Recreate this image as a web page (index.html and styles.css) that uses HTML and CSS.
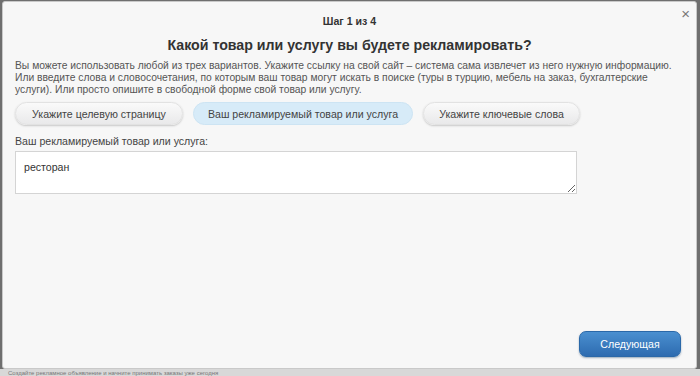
FILE: index.html
```html
<!DOCTYPE html>
<html>
<head>
    <meta charset="utf-8">
    <link rel="stylesheet" href="styles.css">
</head>
<body>
    <div class="dialog">
        <span class="close">&#215;</span>
        <div class="step">Шаг 1 из 4</div>
        <h1>Какой товар или услугу вы будете рекламировать?</h1>
        <p class="intro">Вы можете использовать любой из трех вариантов. Укажите ссылку на свой сайт – система сама извлечет из него нужную информацию. Или введите слова и словосочетания, по которым ваш товар могут искать в поиске (туры в турцию, мебель на заказ, бухгалтерские услуги). Или просто опишите в свободной форме свой товар или услугу.</p>
        <div class="tabs">
            <button class="tab tab1">Укажите целевую страницу</button>
            <button class="tab tab2 active">Ваш рекламируемый товар или услуга</button>
            <button class="tab tab3">Укажите ключевые слова</button>
        </div>
        <label class="label">Ваш рекламируемый товар или услуга:</label>
        <textarea class="field">ресторан</textarea>
        <div class="footer">
            <button class="next">Следующая</button>
        </div>
    </div>
    <div class="pagebelow">Создайте рекламное объявление и начните принимать заказы уже сегодня</div>
</body>
</html>
```
FILE: styles.css
```css
body {
    margin: 0;
    background-color: #6f6f6f;
    font-family: "Liberation Sans", Arial, sans-serif;
    height: 376px;
    overflow: hidden;
}

.dialog {
    position: relative;
    margin: 1px 2px 0 2px;
    height: 366px;
    width: 669px;
    padding: 0 12px;
    background-color: #f7f7f7;
    border: 1px solid #c9c9c9;
    border-radius: 3px;
    display: flex;
    flex-direction: column;
}

.close {
    position: absolute;
    right: 6px;
    top: 3px;
    font-size: 15px;
    color: #777;
}

.step {
    text-align: center;
    font-size: 10.6px;
    line-height: 12px;
    font-weight: bold;
    color: #333;
    margin-top: 13px;
}

h1 {
    margin: 10px 0 0 0;
    text-align: center;
    font-size: 14.2px;
    line-height: 16px;
    font-weight: bold;
    color: #333;
}

.intro {
    margin: 7px 0 0 0;
    font-size: 10.3px;
    line-height: 12px;
    color: #555;
}

.tabs {
    display: flex;
    gap: 10px;
    margin-top: 6px;
}

.tab {
    height: 23px;
    border: 1px solid #e2e2e2;
    border-radius: 12px;
    background: linear-gradient(#fafafa, #e9e9ea);
    box-shadow: 0 1px 2px #c8c8c8;
    font-family: "Liberation Sans", Arial, sans-serif;
    font-size: 10.6px;
    color: #444;
    padding: 0;
}

.tab1 { width: 168px; }
.tab2 { width: 220px; }
.tab3 { width: 157px; }

.tab.active {
    background: #d7ebf8;
    border-color: #cde4f3;
    box-shadow: none;
}

.label {
    margin-top: 10px;
    font-size: 10.6px;
    line-height: 12px;
    color: #444;
}

.field {
    margin-top: 4px;
    width: 562px;
    height: 43px;
    box-sizing: border-box;
    border: 1px solid #d4d4d4;
    background: #fff;
    padding: 9px 8px;
    font-family: "Liberation Sans", Arial, sans-serif;
    font-size: 10.6px;
    color: #333;
    resize: vertical;
}

.footer {
    margin-top: auto;
    margin-bottom: 11px;
    margin-right: 3px;
    display: flex;
    justify-content: flex-end;
}

.next {
    width: 102px;
    height: 26px;
    border: 1px solid #2a68a8;
    border-radius: 7px;
    background: linear-gradient(#4a8fd0, #2d6bb0);
    color: #fff;
    font-family: "Liberation Sans", Arial, sans-serif;
    font-size: 10.6px;
    box-shadow: 0 1px 2px #9ab;
}

.pagebelow {
    background: #d8d8d8;
    color: #777;
    font-size: 6px;
    height: 8px;
    line-height: 8px;
    padding-left: 8px;
    white-space: nowrap;
}
```
